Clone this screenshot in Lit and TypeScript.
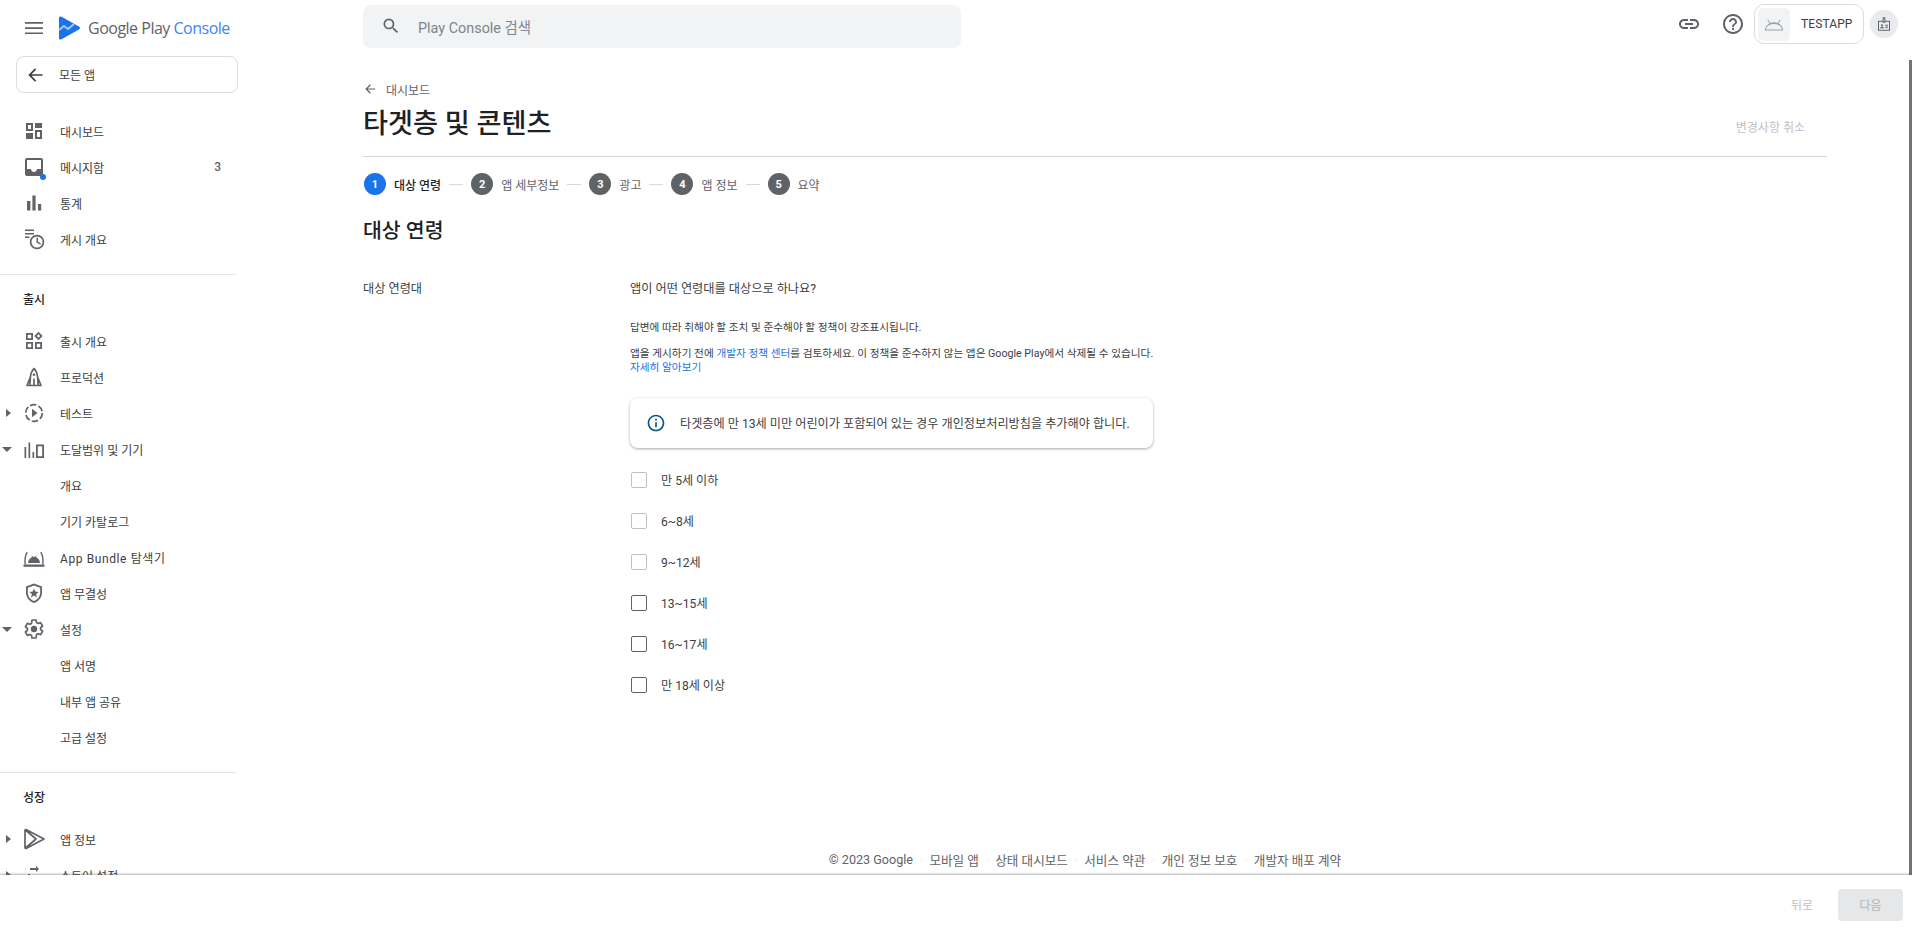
import { LitElement, html, css, svg } from "lit";
import { customElement } from "lit/decorators.js";

const ic = (content: unknown, cls = "ic") => html`<svg class=${cls} viewBox="0 0 24 24">${content}</svg>`;

const icons: Record<string, unknown> = {
  dashboard: svg`<path d="M4 4h7v8H4zM6 6v4h3V6z" fill-rule="evenodd"/><path d="M13 4h7v5h-7zM4 14h7v6H4z"/><path d="M13 11h7v9h-7zm2 2v5h3v-5z" fill-rule="evenodd"/>`,
  inbox: svg`<path d="M19 3H5c-1.1 0-2 .9-2 2v14c0 1.1.9 2 2 2h14c1.1 0 2-.9 2-2V5c0-1.1-.9-2-2-2zm0 11h-4c0 1.66-1.34 3-3 3s-3-1.34-3-3H5V5h14v9z"/>`,
  bars: svg`<path d="M5 10h3.4v9.5H5zM10.4 4.5h3.2v15h-3.2zM16 13h3.2v6.5H16z"/>`,
  schedule: svg`<path d="M3 2.5h9v1.6H3zM3 6h9v1.6H3zM3 9.5h4.5v1.6H3z"/><circle cx="15" cy="15" r="6.4" fill="none" stroke="currentColor" stroke-width="1.7"/><path d="M14.5 10.8h1.5v4l3 1.8-.7 1.1-3.8-2.2z"/>`,
  release: svg`<path d="M4 4h7v7H4zm1.8 1.8v3.4h3.4V5.8zM4 13h7v7H4zm1.8 1.8v3.4h3.4v-3.4zM13 13h7v7h-7zm1.8 1.8v3.4h3.4v-3.4z" fill-rule="evenodd"/><path d="M16.5 2.8l4.2 4.2-4.2 4.2L12.3 7zm0 2.5L14.8 7l1.7 1.7L18.2 7z" fill-rule="evenodd"/>`,
  rocket: svg`<path fill="none" stroke="currentColor" stroke-width="1.700" stroke-linejoin="round" d="M12 3.500C9.800 5.800 8.700 8.700 8.400 12L5 20.500h14L15.600 12C15.300 8.700 14.200 5.800 12 3.500zM8.400 12 7.800 20.500M15.600 12l.6 8.500M12 13.500v7"/><circle cx="12" cy="9.800" r="1.300"/>`,
  test: svg`<circle cx="12" cy="12" r="8.300" fill="none" stroke="currentColor" stroke-width="1.700" stroke-dasharray="6.500 2.200"/><path d="M10 7.800l5.500 4.200L10 16.200z"/>`,
  reach: svg`<path d="M2.500 10h1.700v11H2.500zM6.500 5.500h1.700V21H6.500zM10.500 15h1.700v6h-1.700z"/><path d="M14 7.500h8V21h-8zm1.800 1.800v9.900h4.400V9.300z" fill-rule="evenodd"/>`,
  bundle: svg`<path d="M1.500 19.500h21v2.300h-21z"/><path d="M2.600 19.500C1.800 15 2.400 10.500 4.600 6.700l1.200.7C3.800 11 3.300 15 4 19.500zM21.400 19.500c.8-4.500.2-9-2-12.800l-1.200.7c2 3.600 2.500 7.600 1.800 12.100z"/><path d="M6 18c.3-3 2-5 4.200-5.900L9.400 10.700l.6-.3 1 1.500c.7-.1 1.300-.1 2 0l1-1.500.6.300-.8 1.400C16 13 17.700 15 18 18z"/>`,
  shield: svg`<path d="M12 2.500l8 3v6c0 5-3.400 9-8 10.500-4.600-1.500-8-5.500-8-10.500v-6zm0 2L5.800 6.800v4.700c0 4 2.600 7.300 6.200 8.600 3.600-1.300 6.200-4.600 6.200-8.600V6.800z" fill-rule="evenodd"/><path d="M12 7.500l1.300 3.100 3.300.3-2.500 2.200.8 3.300-2.900-1.800-2.900 1.800.8-3.300-2.500-2.200 3.300-.3z"/>`,
  settings: svg`<path fill="none" stroke="currentColor" stroke-width="1.700" stroke-linejoin="round" d="M10 3h4l.5 2.600 1.600.9 2.500-.9 2 3.400-2 1.700v1.800l2 1.700-2 3.400-2.500-.9-1.600.9L14 21h-4l-.5-2.600-1.600-.9-2.500.9-2-3.400 2-1.700v-1.800l-2-1.700 2-3.400 2.500.9 1.600-.9z"/><circle cx="12" cy="12" r="3.200"/>`,
  play: svg`<path fill="none" stroke="currentColor" stroke-width="1.700" stroke-linejoin="round" d="M3 3.500v17c0 .9.8 1.200 1.500.8L22 12 4.500 2.700C3.800 2.300 3 2.600 3 3.500zM3.500 3l10.500 9L3.500 21"/>`,
  store: svg`<path d="M14 3l3 3-3 3V7H8V5h6zM3 15h10v2H3zM6 11h2v10H6z"/>`,
};

const nav1 = [
  { icon: "dashboard", t: "대시보드" },
  { icon: "inbox", t: "메시지함", badge: "3", dot: true },
  { icon: "bars", t: "통계" },
  { icon: "schedule", t: "게시 개요" },
];
const nav2 = [
  { icon: "release", t: "출시 개요" },
  { icon: "rocket", t: "프로덕션" },
  { icon: "test", t: "테스트", arrow: "r" },
  { icon: "reach", t: "도달범위 및 기기", arrow: "d" },
  { t: "개요" },
  { t: "기기 카탈로그" },
  { icon: "bundle", t: "App Bundle 탐색기", wide: true },
  { icon: "shield", t: "앱 무결성" },
  { icon: "settings", t: "설정", arrow: "d" },
  { t: "앱 서명" },
  { t: "내부 앱 공유" },
  { t: "고급 설정" },
];
const nav3 = [
  { icon: "play", t: "앱 정보", arrow: "r" },
  { icon: "store", t: "스토어 설정", arrow: "r" },
];
const steps = ["대상 연령", "앱 세부정보", "광고", "앱 정보", "요약"];
const ages: [string, boolean][] = [
  ["만 5세 이하", true],
  ["6~8세", true],
  ["9~12세", true],
  ["13~15세", false],
  ["16~17세", false],
  ["만 18세 이상", false],
];
const foot = ["© 2023 Google", "모바일 앱", "상태 대시보드", "서비스 약관", "개인 정보 보호", "개발자 배포 계약"];

@customElement("app-root")
export class AppRoot extends LitElement {
  static styles = css`
    :host {
      display: flex;
      flex-direction: column;
      position: relative;
      width: 1912px;
      height: 934px;
      overflow: hidden;
      background: #fff;
      color: #3c4043;
      font-family: Roboto, "Noto Sans CJK KR", sans-serif;
      font-size: 12px;
    }
    .top { flex: 1; display: flex; min-height: 0; }
    .side { width: 238px; flex: none; display: flex; flex-direction: column; overflow: hidden; }
    .brand { height: 56px; flex: none; display: flex; align-items: center; padding-left: 22px; }
    .brand .ic { color: #5f6368; }
    .logo { width: 22px; height: 24px; margin-left: 12px; margin-right: 8px; }
    .word { font-family: "Open Sans", sans-serif; font-size: 16px; letter-spacing: -0.500px; color: #5f6368; white-space: nowrap; }
    .word b { font-weight: 400; color: #4285f4; }
    .all { flex: none; margin-left: 16px; height: 37px; width: 222px; box-sizing: border-box; border: 1px solid #dadce0; border-radius: 8px; display: flex; align-items: center; padding-left: 8px; gap: 14px; margin-bottom: 20px; }
    .all .ic { width: 20px; height: 20px; color: #3c4043; }
    .item { flex: none; height: 36px; display: flex; align-items: center; position: relative; white-space: nowrap; }
    .wide { letter-spacing: 0.600px; }
    .slot { width: 22px; flex: none; display: flex; justify-content: center; padding-right: 8px; box-sizing: border-box; }
    .r { width: 0; height: 0; border-left: 5px solid #5f6368; border-top: 4px solid transparent; border-bottom: 4px solid transparent; margin-left: 3px; }
    .d { width: 0; height: 0; border-top: 5px solid #5f6368; border-left: 5px solid transparent; border-right: 5px solid transparent; }
    .iconbox { width: 24px; height: 24px; flex: none; margin-right: 14px; position: relative; }
    .ic { width: 24px; height: 24px; display: block; fill: currentColor; color: #5f6368; }
    .dot { position: absolute; width: 6px; height: 6px; border-radius: 50%; background: #1a73e8; left: 18px; bottom: -1px; }
    .badge { margin-left: auto; margin-right: 17px; font-weight: 500; font-size: 12px; color: #5f6368; }
    .sep { flex: none; height: 1px; background: #e3e5e7; width: 236px; }
    .sect { flex: none; height: 48px; box-sizing: border-box; padding-bottom: 2px; display: flex; align-items: center; padding-left: 23px; font-weight: 500; color: #202124; font-size: 12px; }
    .sep.a { margin-top: 17px; }
    .main { flex: 1; min-width: 0; display: flex; flex-direction: column; }
    .head { flex: none; height: 56px; display: flex; align-items: center; padding-left: 125px; }
    .search { width: 598px; height: 43px; box-sizing: border-box; background: #f1f3f4; border-radius: 8px; display: flex; align-items: center; padding-left: 18px; gap: 17px; color: #80868b; font-size: 14.400px; margin-top: -4px; }
    .search .ic { width: 20px; height: 20px; }
    .acts { margin-left: auto; display: flex; align-items: center; padding-right: 14px; margin-top: -8px; }
    .acts .ic { color: #5f6368; }
    .acts .link { margin-right: 20px; }
    .acts .help { margin-right: 9px; }
    .chip { width: 110px; height: 40px; box-sizing: border-box; border: 1px solid #dadce0; border-radius: 10px; display: flex; align-items: center; padding-left: 3px; gap: 11px; color: #3c4043; font-size: 12px; letter-spacing: 0.100px; margin-right: 6px; }
    .thumb { width: 32px; height: 33px; border-radius: 5px; background: #f1f3f4; display: flex; align-items: center; justify-content: center; }
    .thumb .ic { width: 22px; height: 22px; color: #9aa0a6; }
    .ava { width: 28px; height: 28px; border-radius: 50%; background: #e8eaed; display: flex; align-items: center; justify-content: center; }
    .ava .ic { width: 16px; height: 16px; }
    .page { flex: 1; min-height: 0; display: flex; flex-direction: column; padding-left: 125px; padding-right: 85px; }
    .crumb { display: flex; align-items: center; height: 16px; margin-top: 25px; gap: 9px; color: #5f6368; font-size: 12px; }
    .crumb .ic { width: 14px; height: 14px; }
    .titlerow { display: flex; align-items: center; justify-content: space-between; height: 42px; margin-top: 6px; }
    h1 { margin: 0; font-size: 27.200px; font-weight: 500; color: #202124; line-height: 42px; }
    .undo { color: #bdc1c6; font-size: 12px; margin-right: 22px; margin-top: 5px; }
    .rule { height: 1px; background: #d6d8da; margin-top: 11px; }
    .steps { display: flex; align-items: center; height: 22px; margin-top: 16px; padding-left: 1px; }
    .num { width: 22px; height: 22px; border-radius: 50%; background: #5f6368; color: #fff; font-size: 11px; font-weight: 700; display: flex; align-items: center; justify-content: center; flex: none; }
    .num.on { background: #1a73e8; }
    .stext { margin-left: 8px; color: #5f6368; font-size: 12px; }
    .stext.on { color: #202124; font-weight: 500; }
    .line { width: 14px; height: 1px; background: #d6d8da; margin: 0 8px; flex: none; }
    h2 { margin: 21px 0 0; font-size: 20.500px; font-weight: 500; color: #202124; line-height: 30px; }
    .form { display: flex; margin-top: 34px; }
    .lab { width: 267px; flex: none; font-size: 12.200px; line-height: 18px; color: #3c4043; }
    .q { font-size: 12.200px; line-height: 18px; color: #3c4043; }
    .sm { font-size: 10.670px; line-height: 14px; color: #3c4043; }
    .p1 { margin-top: 23px; }
    .p2 { margin-top: 12px; }
    a { color: #1a73e8; text-decoration: none; }
    .card { width: 523px; height: 50px; box-sizing: border-box; margin-top: 23px; border-radius: 8px; box-shadow: 0 1px 3px rgba(60, 64, 67, 0.45); display: flex; align-items: center; padding-left: 16px; gap: 14px; font-size: 12.170px; color: #3c4043; }
    .card .ic { width: 20px; height: 20px; color: #0b5587; }
    .opts { margin-top: 11px; display: flex; flex-direction: column; }
    .opt { height: 41px; display: flex; align-items: center; gap: 14px; font-size: 12.100px; color: #3c4043; padding-left: 1px; }
    .box { width: 16px; height: 16px; box-sizing: border-box; border: 1px solid #5f6368; border-radius: 2px; }
    .box.off { border-color: #bdc1c6; }
    .foot { margin-top: auto; height: 28px; display: flex; align-items: center; justify-content: center; padding-right: 20px; padding-bottom: 3px; box-sizing: border-box; color: #5f6368; font-size: 12.600px; }
    .foot i { font-style: normal; color: #c4c7ca; margin: 0 7px; font-size: 9px; }
    .bar { flex: none; height: 59px; background: #fff; box-shadow: 0 -1px 2px rgba(60, 64, 67, 0.4); display: flex; align-items: center; justify-content: flex-end; padding-right: 9px; z-index: 1; position: relative; }
    .back { color: #bdc1c6; font-size: 12px; margin-right: 25px; }
    .next { width: 65px; height: 32px; border-radius: 4px; background: #e5e7e8; color: #b3b6b9; font-size: 12px; display: flex; align-items: center; justify-content: center; }
    .scroll { position: absolute; right: 0; top: 60px; width: 3px; height: 815px; background: #70757a; }
  `;

  private row(n: { icon?: string; t: string; badge?: string; dot?: boolean; arrow?: string; wide?: boolean }) {
    return html`<div class="item">
      <span class="slot">${n.arrow ? html`<span class=${n.arrow}></span>` : ""}</span>
      <span class="iconbox">${n.icon ? ic(icons[n.icon]) : ""}${n.dot ? html`<span class="dot"></span>` : ""}</span>
      <span class=${n.wide ? "wide" : ""}>${n.t}</span>
      ${n.badge ? html`<span class="badge">${n.badge}</span>` : ""}
    </div>`;
  }

  render() {
    const back = svg`<path d="M21 11H7.830l5.590-5.590L12 4l-8 8 8 8 1.410-1.410L7.830 13H21z"/>`;
    return html`
      <div class="top">
        <aside class="side">
          <div class="brand">
            ${ic(svg`<path d="M3 6h18v1.700H3zM3 11.200h18v1.700H3zM3 16.400h18v1.700H3z"/>`)}
            <svg class="logo" viewBox="0 0 22 24">
              <path fill="#1a73e8" d="M1 2c0-1.500 1.300-2 2.500-1.300L21 10.500c1.400.8 1.400 2.200 0 3L3.500 23.300C2.300 24 1 23.500 1 22z"/>
              <path fill="none" stroke="#a8c7fa" stroke-width="2" d="M1 14l5-4 4 3 6-5"/>
            </svg>
            <span class="word">Google Play <b>Console</b></span>
          </div>
          <div class="all">${ic(back)}<span>모든 앱</span></div>
          ${nav1.map((n) => this.row(n))}
          <div class="sep a"></div>
          <div class="sect">출시</div>
          ${nav2.map((n) => this.row(n))}
          <div class="sep a"></div>
          <div class="sect">성장</div>
          ${nav3.map((n) => this.row(n))}
        </aside>
        <main class="main">
          <header class="head">
            <div class="search">
              ${ic(svg`<path d="M15.500 14h-.790l-.280-.270A6.470 6.470 0 0 0 16 9.500 6.500 6.500 0 1 0 9.500 16c1.610 0 3.090-.590 4.230-1.570l.270.280v.790l5 4.990L20.490 19l-4.990-5zm-6 0C7.010 14 5 11.990 5 9.500S7.010 5 9.500 5 14 7.010 14 9.500 11.990 14 9.500 14z"/>`)}
              <span>Play Console 검색</span>
            </div>
            <div class="acts">
              <span class="link">${ic(svg`<path d="M3.900 12c0-1.710 1.390-3.100 3.100-3.100h4V7H7c-2.760 0-5 2.240-5 5s2.240 5 5 5h4v-1.900H7c-1.710 0-3.100-1.390-3.100-3.100zM8 13h8v-2H8v2zm9-6h-4v1.900h4c1.710 0 3.100 1.390 3.100 3.100s-1.390 3.100-3.100 3.100h-4V17h4c2.760 0 5-2.240 5-5s-2.240-5-5-5z"/>`)}</span>
              <span class="help">${ic(svg`<path d="M11 18h2v-2h-2v2zm1-16C6.480 2 2 6.480 2 12s4.480 10 10 10 10-4.480 10-10S17.520 2 12 2zm0 18c-4.410 0-8-3.590-8-8s3.590-8 8-8 8 3.590 8 8-3.590 8-8 8zm0-14c-2.210 0-4 1.790-4 4h2c0-1.100.9-2 2-2s2 .9 2 2c0 2-3 1.750-3 5h2c0-2.250 3-2.500 3-5 0-2.210-1.790-4-4-4z"/>`)}</span>
              <div class="chip">
                <span class="thumb">${ic(svg`<path d="M2 19c.3-3.500 2.300-6.200 5-7.500L4.800 7.500l.8-.5 2.300 3.900c2.600-1 5.600-1 8.200 0L18.400 7l.8.5L17 11.500c2.700 1.300 4.700 4 5 7.500zm1.200-1h17.600c-.6-3.500-4-6-8.800-6s-8.200 2.500-8.800 6z" fill-rule="evenodd"/>`)}</span>
                <span>TESTAPP</span>
              </div>
              <span class="ava">${ic(svg`<path d="M10 2h4v5h7v15H3V7h7zm1.500 1.500v5h1v-5zM4.500 8.500v12h15v-12H14V10h-4V8.500zM9 12.500a1.500 1.500 0 1 1 0 3 1.500 1.500 0 0 1 0-3zM6 18.500c0-1.500 1.500-2.300 3-2.300s3 .8 3 2.300zM14 13h4v1.500h-4zM14 16h4v1.500h-4z" fill-rule="evenodd"/>`)}</span>
            </div>
          </header>
          <div class="page">
            <div class="crumb">${ic(back)}<span>대시보드</span></div>
            <div class="titlerow"><h1>타겟층 및 콘텐츠</h1><span class="undo">변경사항 취소</span></div>
            <div class="rule"></div>
            <div class="steps">
              ${steps.map(
                (s, i) => html`${i ? html`<span class="line"></span>` : ""}
                  <span class="num ${i === 0 ? "on" : ""}">${i + 1}</span>
                  <span class="stext ${i === 0 ? "on" : ""}">${s}</span>`
              )}
            </div>
            <h2>대상 연령</h2>
            <div class="form">
              <div class="lab">대상 연령대</div>
              <div>
                <div class="q">앱이 어떤 연령대를 대상으로 하나요?</div>
                <div class="sm p1">답변에 따라 취해야 할 조치 및 준수해야 할 정책이 강조표시됩니다.</div>
                <div class="sm p2">앱을 게시하기 전에 <a>개발자 정책 센터</a>를 검토하세요. 이 정책을 준수하지 않는 앱은 Google Play에서 삭제될 수 있습니다.<br /><a>자세히 알아보기</a></div>
                <div class="card">
                  ${ic(svg`<path d="M11 7h2v2h-2zm0 4h2v6h-2zm1-9C6.480 2 2 6.480 2 12s4.480 10 10 10 10-4.480 10-10S17.520 2 12 2zm0 18c-4.410 0-8-3.590-8-8s3.590-8 8-8 8 3.590 8 8-3.590 8-8 8z"/>`)}
                  <span>타겟층에 만 13세 미만 어린이가 포함되어 있는 경우 개인정보처리방침을 추가해야 합니다.</span>
                </div>
                <div class="opts">
                  ${ages.map(
                    ([t, off]) => html`<div class="opt"><span class="box ${off ? "off" : ""}"></span><span>${t}</span></div>`
                  )}
                </div>
              </div>
            </div>
            <footer class="foot">
              ${foot.map((f, i) => html`${i ? html`<i>·</i>` : ""}<span>${f}</span>`)}
            </footer>
          </div>
        </main>
      </div>
      <div class="bar">
        <span class="back">뒤로</span>
        <span class="next">다음</span>
      </div>
      <div class="scroll"></div>
    `;
  }
}
